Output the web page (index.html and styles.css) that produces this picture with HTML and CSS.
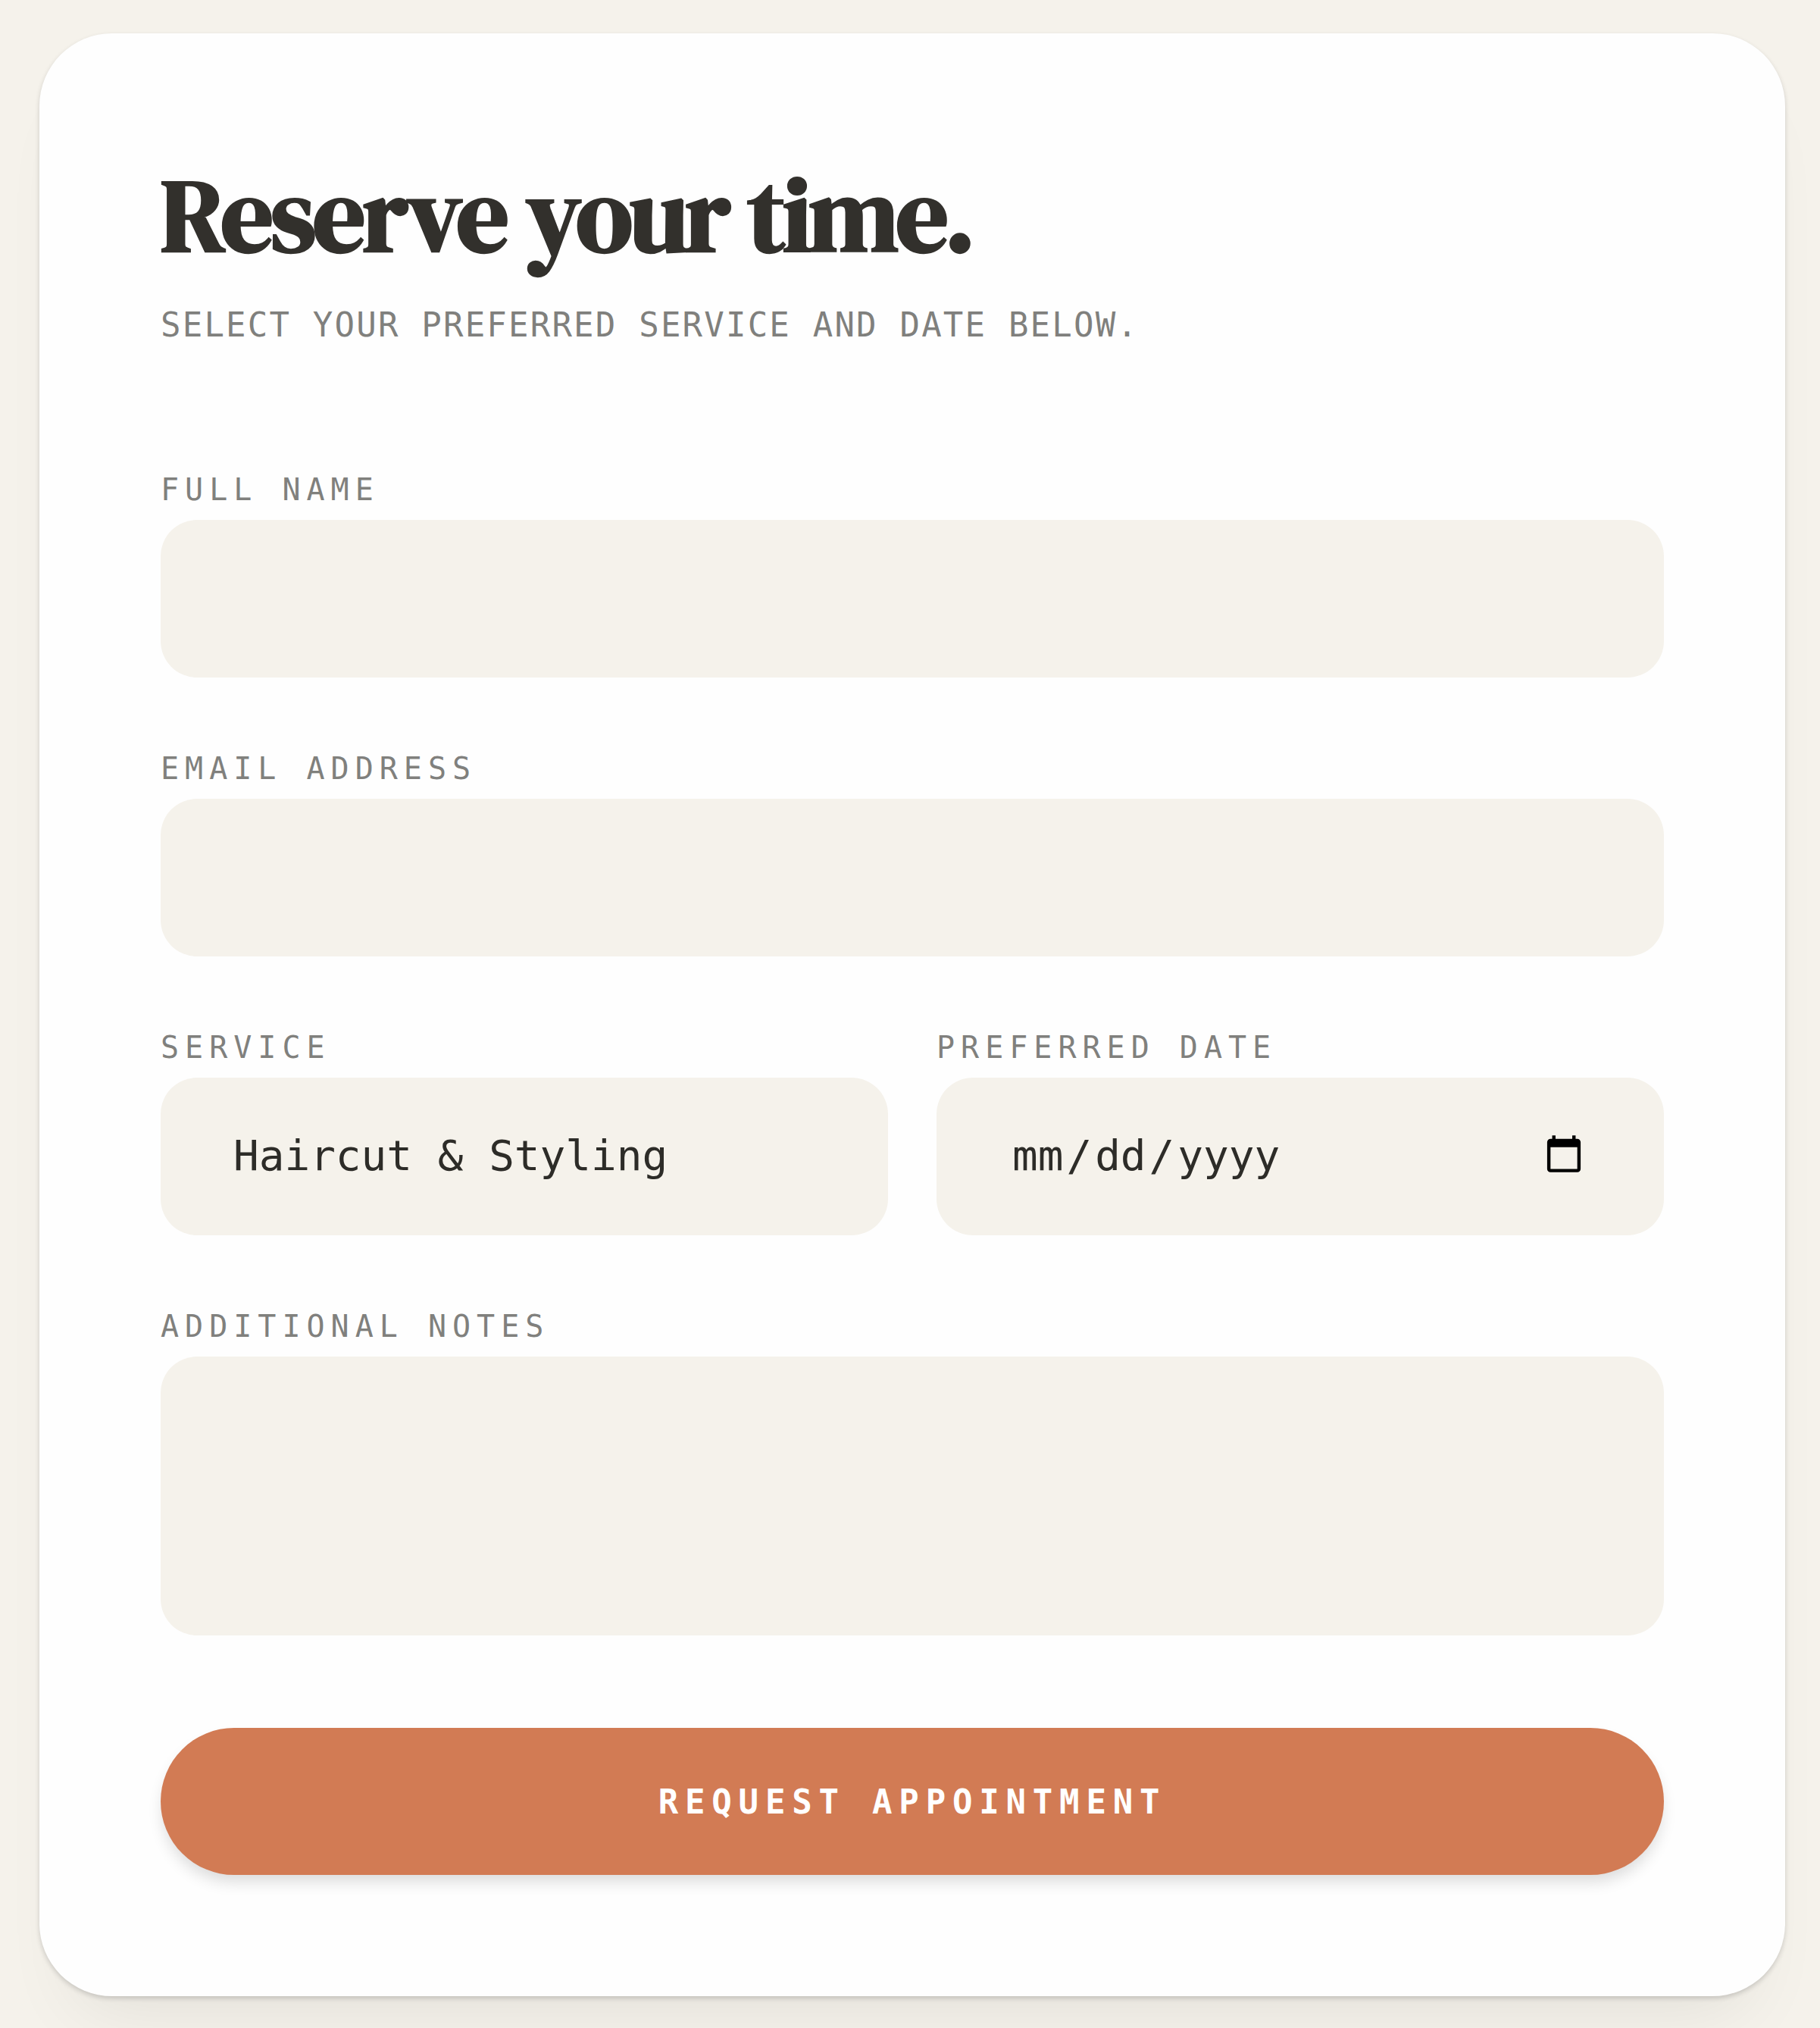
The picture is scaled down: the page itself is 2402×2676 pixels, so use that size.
FILE: index.html
```html
<!DOCTYPE html>
<html lang="en">

<head>
    <meta charset="UTF-8">
    <meta name="viewport" content="width=device-width, initial-scale=1.0">
    <title>Reserve your time</title>
    <link rel="stylesheet" href="styles.css">
</head>

<body>
    <main class="booking-card">
        <header class="booking-header">
            <h1>Reserve your time.</h1>
            <p>SELECT YOUR PREFERRED SERVICE AND DATE BELOW.</p>
        </header>

        <form class="booking-form">
            <div class="field">
                <label for="fullName">FULL NAME</label>
                <input type="text" id="fullName" name="fullName">
            </div>

            <div class="field">
                <label for="email">EMAIL ADDRESS</label>
                <input type="email" id="email" name="email">
            </div>

            <div class="field-row">
                <div class="field">
                    <label for="service">SERVICE</label>
                    <select id="service" name="service">
                        <option>Haircut &amp; Styling</option>
                    </select>
                </div>
                <div class="field">
                    <label for="date">PREFERRED DATE</label>
                    <input type="date" id="date" name="date">
                </div>
            </div>

            <div class="field">
                <label for="notes">ADDITIONAL NOTES</label>
                <textarea id="notes" name="notes"></textarea>
            </div>

            <button type="submit">REQUEST APPOINTMENT</button>
        </form>
    </main>
</body>

</html>
```
FILE: styles.css
```css
* {
    margin: 0;
    padding: 0;
    box-sizing: border-box;
}

body {
    background-color: #f5f2eb;
    min-height: 100vh;
    padding: 44px 46px 42px 52px;
    font-family: 'DejaVu Sans Mono', Menlo, monospace;
    color: #2d2c28;
}

.booking-card {
    background-color: #fefefe;
    border-radius: 96px;
    padding: 160px;
    box-shadow: 0 3px 6px rgba(0, 0, 0, 0.16), 0 64px 96px -48px rgba(0, 0, 0, 0.08);
}

.booking-header {
    margin-bottom: 160px;
}

.booking-header h1 {
    font-family: 'DM Serif Display', 'Liberation Serif', serif;
    font-size: 136px;
    font-weight: bold;
    line-height: 160px;
    letter-spacing: -0.025em;
    color: #32302c;
    margin-bottom: 32px;
}

.booking-header p {
    font-size: 44px;
    line-height: 66px;
    letter-spacing: 0.05em;
    color: #80807d;
}

.booking-form {
    display: flex;
    flex-direction: column;
    gap: 96px;
}

.field {
    display: flex;
    flex-direction: column;
    gap: 16px;
}

.field-row {
    display: grid;
    grid-template-columns: 1fr 1fr;
    gap: 64px;
}

label {
    font-size: 40px;
    line-height: 48px;
    letter-spacing: 0.2em;
    color: #80807d;
}

input,
select,
textarea {
    width: 100%;
    height: 208px;
    padding: 0 96px 4px;
    background-color: #f5f2eb;
    border: none;
    border-radius: 48px;
    font-family: inherit;
    font-size: 56px;
    color: inherit;
    appearance: none;
}

input::-webkit-datetime-edit-month-field,
input::-webkit-datetime-edit-day-field,
input::-webkit-datetime-edit-year-field {
    padding: 0 4px;
}

input::-webkit-calendar-picker-indicator {
    margin-right: 6px;
}

textarea {
    height: 368px;
    padding: 64px 96px;
    resize: none;
}

button {
    height: 194px;
    margin-top: 26px;
    background-color: #d27b54;
    color: #fff;
    border: none;
    border-radius: 97px;
    box-shadow: 0 12px 20px -3px rgba(0, 0, 0, 0.14);
    font-family: inherit;
    font-size: 44px;
    font-weight: bold;
    letter-spacing: 0.2em;
    cursor: pointer;
}

button:hover {
    background-color: #c06c46;
}
```
